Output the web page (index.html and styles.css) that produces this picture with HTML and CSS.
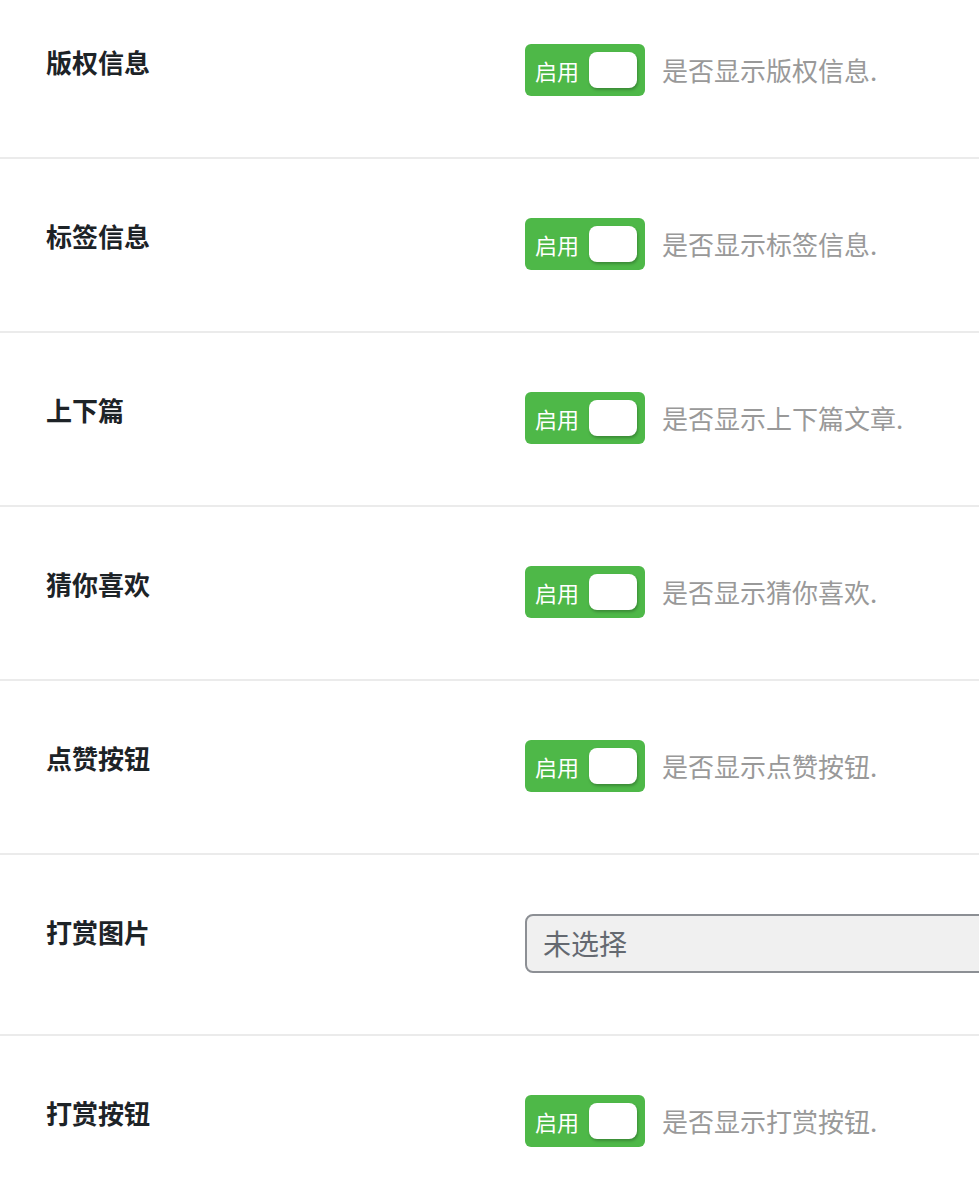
FILE: index.html
```html
<!DOCTYPE html>
<html lang="zh-CN">
<head>
<meta charset="utf-8">
<title>设置</title>
<link rel="stylesheet" href="styles.css">
</head>
<body>
<div class="settings">
  <div class="row">
    <div class="label">版权信息</div>
    <div class="field">
      <span class="switch"><span class="switch-text">启用</span><span class="knob"></span></span>
      <span class="desc">是否显示版权信息.</span>
    </div>
  </div>
  <div class="row">
    <div class="label">标签信息</div>
    <div class="field">
      <span class="switch"><span class="switch-text">启用</span><span class="knob"></span></span>
      <span class="desc">是否显示标签信息.</span>
    </div>
  </div>
  <div class="row">
    <div class="label">上下篇</div>
    <div class="field">
      <span class="switch"><span class="switch-text">启用</span><span class="knob"></span></span>
      <span class="desc">是否显示上下篇文章.</span>
    </div>
  </div>
  <div class="row">
    <div class="label">猜你喜欢</div>
    <div class="field">
      <span class="switch"><span class="switch-text">启用</span><span class="knob"></span></span>
      <span class="desc">是否显示猜你喜欢.</span>
    </div>
  </div>
  <div class="row">
    <div class="label">点赞按钮</div>
    <div class="field">
      <span class="switch"><span class="switch-text">启用</span><span class="knob"></span></span>
      <span class="desc">是否显示点赞按钮.</span>
    </div>
  </div>
  <div class="row">
    <div class="label">打赏图片</div>
    <div class="field">
      <div class="file-box">未选择</div>
    </div>
  </div>
  <div class="row">
    <div class="label">打赏按钮</div>
    <div class="field">
      <span class="switch"><span class="switch-text">启用</span><span class="knob"></span></span>
      <span class="desc">是否显示打赏按钮.</span>
    </div>
  </div>
</div>
</body>
</html>
```

FILE: styles.css
```css
html, body {
  margin: 0;
  padding: 0;
  background: #ffffff;
  overflow-x: hidden;
}

body {
  font-family: "Noto Sans CJK SC", "Noto Sans", "Liberation Sans", sans-serif;
}

.settings {
  margin-top: -15px;
  overflow: hidden;
}

.row {
  display: flex;
  align-items: flex-start;
  padding: 59px 0 61px;
  border-bottom: 2px solid #ebebeb;
}

.label {
  flex: 0 0 525px;
  box-sizing: border-box;
  padding-left: 46px;
  font-size: 26px;
  font-weight: 700;
  line-height: 36px;
  color: #1d2327;
}

.field {
  display: flex;
  align-items: center;
  flex: 0 0 auto;
}

.switch {
  position: relative;
  display: flex;
  align-items: center;
  width: 120px;
  height: 52px;
  box-sizing: border-box;
  padding-left: 10px;
  background: #4eb848;
  border-radius: 6px;
}

.switch-text {
  color: #ffffff;
  font-size: 22px;
  line-height: 52px;
}

.knob {
  position: absolute;
  top: 8px;
  right: 8px;
  width: 48px;
  height: 36px;
  background: #ffffff;
  border-radius: 8px;
  box-shadow: 1px 2px 3px rgba(0, 0, 0, 0.25);
}

.desc {
  margin-left: 17px;
  font-size: 26px;
  line-height: 52px;
  color: #999999;
}

.file-box {
  width: 520px;
  height: 59px;
  box-sizing: border-box;
  padding-left: 16px;
  border: 2px solid #8c8f94;
  border-radius: 8px;
  background: #f0f0f0;
  color: #646970;
  font-size: 28px;
  line-height: 55px;
}
```
